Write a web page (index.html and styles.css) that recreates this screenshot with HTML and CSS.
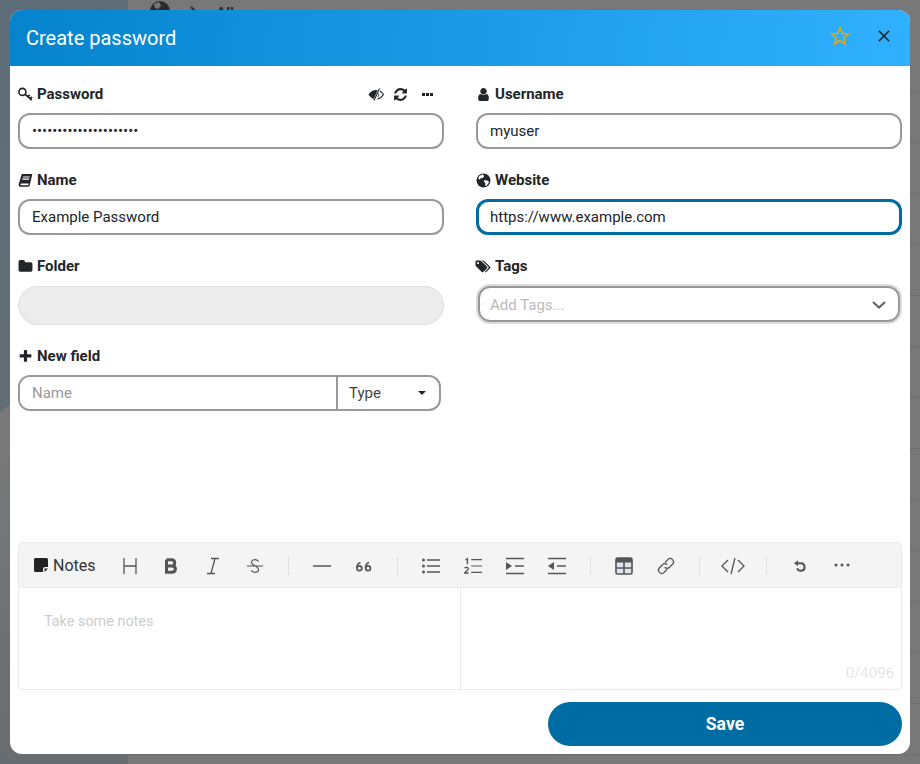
FILE: index.html
```html
<!DOCTYPE html>
<html lang="en">
<head>
    <meta charset="UTF-8">
    <meta name="viewport" content="width=device-width, initial-scale=1.0">
    <title>Create password</title>
    <link rel="stylesheet" href="styles.css">
</head>
<body>

    <div class="page">
        <div class="sidebar"><div class="sidebar-glow"></div></div>
        <div class="list">
            <div class="list-row list-top">
                <svg class="list-globe" viewBox="0 0 20 20"><circle cx="10" cy="10" r="10" fill="#2b2b2b"/><path d="M4 3 9 1l2 4-3 3-3-1zM13 11l5-1-2 6-3 1z" fill="#777"/></svg>
                <svg class="list-chevron" viewBox="0 0 10 10"><path d="M2 1 7 6" fill="none" stroke="#2b2b2b" stroke-width="2"/></svg>
                <span class="list-title">All</span>
            </div>
            <div class="list-row"></div><div class="list-row"></div><div class="list-row"></div>
            <div class="list-row"></div><div class="list-row"></div><div class="list-row"></div>
            <div class="list-row"></div><div class="list-row"></div><div class="list-row"></div>
            <div class="list-row"></div><div class="list-row"></div><div class="list-row"></div>
            <div class="list-row"></div>
        </div>
    </div>

    <div class="modal">
        <div class="modal-header">
            <h1>Create password</h1>
            <svg class="star" viewBox="0 0 20 20"><path d="M10 1.800 12.300 7.600 18.500 8 13.700 12 15.300 18 10 14.700 4.700 18 6.300 12 1.500 8 7.700 7.600Z" fill="none" stroke="#e2a610" stroke-width="1.600" stroke-linejoin="miter"/></svg>
            <svg class="close" viewBox="0 0 12 12"><path d="M.8.8 11.200 11.200M11.200.8.8 11.200" fill="none" stroke="#16232c" stroke-width="1.600"/></svg>
        </div>

        <form class="modal-form">
            <div class="form-grid">
                <div class="field">
                    <div class="field-label">
                        <svg class="icon" viewBox="0 0 15 15"><circle cx="4.400" cy="4.900" r="3.500" fill="none" stroke="currentColor" stroke-width="1.600"/><path d="M7 7.200 13.700 13.200M9.700 9.800l2-1.800M12 11.900l2.200-1.900" fill="none" stroke="currentColor" stroke-width="1.800"/></svg>
                        <span>Password</span>
                        <div class="field-actions">
                            <svg class="action eye" viewBox="0 0 16 13"><path d="M.5 6.500C2.500 3.500 5 2 8 2l1.600.2L5.700 11C3.600 10.300 1.900 8.700.5 6.500Z" fill="currentColor"/><path d="M11.500.5 6 12.500" stroke="currentColor" stroke-width="1.100"/><path d="M11.800 3C13.200 3.800 14.600 5 15.500 6.500 14 8.800 12 10.500 9.300 11" fill="none" stroke="currentColor" stroke-width="1.100"/><path d="M10.500 5.500c.5 1.400.1 2.700-1 3.500" fill="none" stroke="currentColor" stroke-width="1"/></svg>
                            <svg class="action refresh" viewBox="0 0 1792 1792"><path fill="currentColor" d="M1639 1056q0 5-1 7-64 268-268 434.500t-478 166.500q-146 0-282.500-55t-243.500-157l-129 129q-19 19-45 19t-45-19-19-45v-448q0-26 19-45t45-19h448q26 0 45 19t19 45-19 45l-137 137q71 66 161 102t187 36q134 0 250-65t186-179q11-17 53-117 8-23 30-23h192q13 0 22.500 9.500t9.500 22.500zm25-800v448q0 26-19 45t-45 19h-448q-26 0-45-19t-19-45 19-45l138-138q-148-137-349-137-134 0-250 65t-186 179q-11 17-53 117-8 23-30 23h-199q-13 0-22.500-9.500t-9.500-22.500v-7q65-268 270-434.500t480-166.500q146 0 284 55.500t245 156.500l130-129q19-19 45-19t45 19 19 45z"/></svg>
                            <svg class="action dots" viewBox="0 0 11 3"><path fill="currentColor" d="M0 0h3v3H0zM4 0h3v3H4zM8 0h3v3H8z"/></svg>
                        </div>
                    </div>
                    <input class="text-input" type="password" value="examplepassword123456">
                </div>

                <div class="field">
                    <div class="field-label">
                        <svg class="icon" viewBox="0 0 1792 1792"><path fill="currentColor" d="M1536 1399q0 109-62.500 187t-150.500 78h-854q-88 0-150.500-78t-62.500-187q0-85 8.500-160.500t31.500-152 58.500-131 94-89 134.500-34.500q131 128 313 128t313-128q76 0 134.500 34.500t94 89 58.500 131 31.500 152 8.500 160.500zm-256-887q0 159-112.500 271.500t-271.500 112.500-271.500-112.500-112.500-271.500 112.500-271.500 271.500-112.500 271.500 112.500 112.500 271.500z"/></svg>
                        <span>Username</span>
                    </div>
                    <input class="text-input" type="text" value="myuser">
                </div>

                <div class="field">
                    <div class="field-label">
                        <svg class="icon" viewBox="0 0 14 14"><path fill="currentColor" fill-rule="evenodd" d="M3.500 1H13.400L11 11.300C10.800 12.200 10.200 12.800 9.400 12.800H2.300C1.200 12.800.4 11.900.7 10.600ZM4.800 3.200 4.500 4.200H10.800L11.100 3.200ZM4.200 5.200 3.900 6.200H10.200L10.500 5.200ZM2.400 10.600C2.200 11 2.500 11.500 3 11.500H9.500L10 9.700H3.100C2.800 9.800 2.500 10.200 2.400 10.600Z"/></svg>
                        <span>Name</span>
                    </div>
                    <input class="text-input" type="text" value="Example Password">
                </div>

                <div class="field">
                    <div class="field-label">
                        <svg class="icon" viewBox="0 0 14 14"><circle cx="7" cy="7" r="6.500" fill="currentColor"/><path fill="#fff" d="M3 2.800 6.500 1.200 7.600 3 6 5 4.300 4.600 3.700 6.200 2 5ZM8 6.500 11 7.200 12.300 8.300 10 11.800 8.500 12 8.800 9.500 7.300 8Z"/></svg>
                        <span>Website</span>
                    </div>
                    <input class="text-input is-focused" type="text" value="https://www.example.com">
                </div>

                <div class="field field-tall">
                    <div class="field-label">
                        <svg class="icon" viewBox="0 0 1792 1792"><path fill="currentColor" d="M1728 608v704q0 92-66 158t-158 66h-1216q-92 0-158-66t-66-158v-960q0-92 66-158t158-66h320q92 0 158 66t66 158v32h672q92 0 158 66t66 158z"/></svg>
                        <span>Folder</span>
                    </div>
                    <input class="text-input is-disabled" type="text" disabled>
                </div>

                <div class="field field-tall">
                    <div class="field-label">
                        <svg class="icon icon-wide" viewBox="0 0 1920 1792"><path fill="currentColor" d="M384 448q0-53-37.500-90.500t-90.500-37.500-90.500 37.500-37.500 90.500 37.500 90.500 90.500 37.500 90.500-37.500 37.500-90.500zm1067 576q0 53-37 90l-491 492q-39 37-91 37-53 0-90-37l-715-716q-38-37-64.500-101t-26.500-117v-416q0-52 38-90t90-38h416q53 0 117 26.500t102 64.500l715 714q37 39 37 91zm384 0q0 53-37 90l-491 492q-39 37-91 37-36 0-59-14t-53-45l470-470q37-37 37-90 0-52-37-91l-715-714q-38-38-102-64.500t-117-26.500h224q53 0 117 26.500t102 64.500l715 714q37 39 37 91z"/></svg>
                        <span>Tags</span>
                    </div>
                    <div class="tags-select">
                        <input type="text" placeholder="Add Tags...">
                        <svg class="tags-chevron" viewBox="0 0 14 8"><path d="M1 1 7 6.500 13 1" fill="none" stroke="#666" stroke-width="2.200"/></svg>
                    </div>
                </div>

                <div class="field">
                    <div class="field-label">
                        <svg class="icon" viewBox="0 0 1792 1792"><path fill="currentColor" d="M1600 736v192q0 40-28 68t-68 28h-416v416q0 40-28 68t-68 28h-192q-40 0-68-28t-28-68v-416h-416q-40 0-68-28t-28-68v-192q0-40 28-68t68-28h416v-416q0-40 28-68t68-28h192q40 0 68 28t28 68v416h416q40 0 68 28t28 68z"/></svg>
                        <span>New field</span>
                    </div>
                    <div class="new-field">
                        <input type="text" placeholder="Name">
                        <div class="type-select">Type<span class="caret"></span></div>
                    </div>
                </div>
            </div>
        </form>

        <div class="editor">
            <div class="toolbar">
                <div class="notes-label">
                    <svg class="notes-icon" viewBox="0 0 14 14"><path fill="#222" d="M1.500 0h11A1.500 1.500 0 0 1 14 1.500V9h-3a2 2 0 0 0-2 2v3H1.500A1.500 1.500 0 0 1 0 12.500v-11A1.500 1.500 0 0 1 1.500 0ZM10.500 10.500H14L10.500 14Z"/></svg>
                    <span>Notes</span>
                </div>
                <button type="button" class="tool"><svg viewBox="0 0 18 18"><path d="M4 1v16M16 1v16M4 9h12" class="thin"/></svg></button>
                <button type="button" class="tool"><svg viewBox="0 0 18 18"><path d="M4.500 2.800v12.400h5.300c2.200 0 3.600-1.400 3.600-3.300 0-1.900-1.400-3-3.600-3H4.500m5 0c2 0 3.200-1.100 3.200-3 0-1.900-1.300-3.100-3.200-3.100H4.500" class="bold"/></svg></button>
                <button type="button" class="tool"><svg viewBox="0 0 18 18"><path d="M7 1.500h8M3 16.500h8M11 1.500 7 16.500" class="thin"/></svg></button>
                <button type="button" class="tool"><svg viewBox="0 0 20 18"><path d="M1 9h18M14 4C13 2.500 11.500 2 10 2 8 2 6 3 6 5c0 3 8 4 8 8 0 2-2 3-4 3-1.800 0-3.400-.6-4.300-2.200" class="thin"/></svg></button>
                <span class="tool-divider"></span>
                <button type="button" class="tool"><svg viewBox="0 0 18 18"><path d="M0 9h18" class="thin"/></svg></button>
                <button type="button" class="tool"><svg viewBox="0 0 16 18"><circle cx="3.400" cy="11.300" r="2.400" class="ring-line"/><circle cx="12" cy="11.300" r="2.400" class="ring-line"/><path d="M1 11C1 8 2.500 6 4.500 5.500M9.600 11c0-3 1.500-5 3.500-5.500" class="ring-line"/></svg></button>
                <span class="tool-divider"></span>
                <button type="button" class="tool"><svg viewBox="0 0 18 18"><path d="M5 3h13M5 9h13M5 15h13" class="thin"/><circle cx="1.500" cy="3" r="1.500" class="dot"/><circle cx="1.500" cy="9" r="1.500" class="dot"/><circle cx="1.500" cy="15" r="1.500" class="dot"/></svg></button>
                <button type="button" class="tool"><svg viewBox="0 0 20 18"><path d="M8 2h12M8 9h12M8 16h12" class="thin"/><path d="M1.800 2.200 3.800 1V7" class="num"/><path d="M.8 11.500c.4-1.300 4-1.300 4 .6 0 1.700-3.600 2.900-4 4.700h4.400" class="num"/></svg></button>
                <button type="button" class="tool"><svg viewBox="0 0 18 18"><path d="M0 1.500h18M9 9h9M0 16.500h18" class="thin"/><path d="M0 5v8l6-4z" class="dot"/></svg></button>
                <button type="button" class="tool"><svg viewBox="0 0 18 18"><path d="M0 1.500h18M9 9h9M0 16.500h18" class="thin"/><path d="M6 5v8L0 9z" class="dot"/></svg></button>
                <span class="tool-divider"></span>
                <button type="button" class="tool"><svg viewBox="0 0 18 18"><rect x="1" y="1" width="16" height="16" rx="1.500" fill="#dde3ef" stroke="#555" stroke-width="1.600"/><rect x="1" y="1" width="16" height="4.500" fill="#555"/><path d="M9 5v12M1 11h16" stroke="#555" stroke-width="1.600"/></svg></button>
                <button type="button" class="tool"><svg viewBox="0 0 18 18"><path d="M8 5.500 10.800 2.600a3.300 3.300 0 0 1 4.700 4.700l-3 3a3.300 3.300 0 0 1-4.700 0M10 12.500l-2.800 2.900a3.300 3.300 0 0 1-4.700-4.700l3-3a3.300 3.300 0 0 1 4.700 0" class="thin"/></svg></button>
                <span class="tool-divider"></span>
                <button type="button" class="tool"><svg class="tool-code" viewBox="0 0 24 18"><path d="M7 3 1 9l6 6M17 3l6 6-6 6M14 1 10 17" class="thin"/></svg></button>
                <span class="tool-divider"></span>
                <button type="button" class="tool"><svg class="tool-undo" viewBox="0 0 12 12"><path d="M2.500 3.200H7a3.800 3.800 0 1 1-3.800 5" class="undo"/><path d="M0 3.200 4 .2v6z" class="dot"/></svg></button>
                <button type="button" class="tool"><svg viewBox="0 0 18 18"><circle cx="3" cy="8" r="1.500" class="dot"/><circle cx="9" cy="8" r="1.500" class="dot"/><circle cx="15" cy="8" r="1.500" class="dot"/></svg></button>
            </div>
            <div class="editor-panes">
                <div class="pane pane-edit">Take some notes</div>
                <div class="pane"></div>
                <span class="counter">0/4096</span>
            </div>
        </div>

        <div class="modal-footer">
            <button type="button" class="save-button">Save</button>
        </div>
    </div>

</body>
</html>
```

FILE: styles.css
```css
* {
    box-sizing: border-box;
}
body {
    margin: 0;
    height: 764px;
    overflow: hidden;
    font-family: Roboto, Arial, sans-serif;
    font-size: 15px;
    color: #212529;
    background-color: #777;
}

/* dimmed page behind the dialog */
.page {
    display: flex;
    height: 764px;
}
.sidebar {
    position: relative;
    width: 128px;
    overflow: hidden;
    background: linear-gradient(#5d6d78, #667074);
}
.sidebar-glow {
    position: absolute;
    left: -60px;
    top: 396px;
    width: 200px;
    height: 400px;
    border-radius: 50% 50% 0 0;
    background: linear-gradient(#7b7a7a, #656c70);
}
.list {
    flex: 1;
    background-color: #787878;
}
.list-row {
    height: 51px;
    border-bottom: 1px solid #6e6e6e;
}
.list-top {
    display: flex;
    align-items: flex-start;
    height: 92px;
}
.list-globe {
    width: 20px;
    height: 20px;
    margin: 1px 0 0 22px;
}
.list-chevron {
    width: 10px;
    height: 10px;
    margin: 6px 0 0 19px;
}
.list-title {
    margin: 5px 0 0 17px;
    font-weight: 700;
    line-height: 16px;
    color: #2b2b2b;
}

/* dialog */
.modal {
    position: absolute;
    left: 10px;
    top: 10px;
    width: 900px;
    height: 744px;
    display: flex;
    flex-direction: column;
    background-color: white;
    border-radius: 12px;
    overflow: hidden;
}
.modal-header {
    display: flex;
    align-items: center;
    height: 56px;
    padding: 0 20px 0 16px;
    background: linear-gradient(95deg, #0584cd, #30b1ff);
}
.modal-header h1 {
    flex: 1;
    margin: 0;
    font-size: 20px;
    font-weight: 400;
    color: white;
}
.star {
    width: 20px;
    height: 20px;
    margin-right: 28px;
    margin-top: -4px;
}
.close {
    width: 12px;
    height: 12px;
    margin-top: -4px;
}

/* fields */
.modal-form {
    flex: 1;
    padding: 18px 8px 0;
}
.form-grid {
    display: grid;
    grid-template-columns: 426px 426px;
    column-gap: 32px;
    row-gap: 21px;
    align-items: start;
}
.field-label {
    display: flex;
    align-items: center;
    gap: 4px;
    height: 20px;
    margin-bottom: 9px;
    font-weight: 700;
}
.field-tall .field-label {
    margin-bottom: 10px;
}
.icon {
    width: 15px;
    height: 15px;
    flex: none;
}
.icon-wide {
    overflow: visible;
}
.field-actions {
    display: flex;
    align-items: center;
    margin-left: auto;
    padding-right: 11px;
}
.action.eye {
    width: 16px;
    height: 13px;
}
.action.refresh {
    width: 15px;
    height: 15px;
    margin-left: 9px;
}
.action.dots {
    width: 11px;
    height: 3px;
    margin-left: 14px;
}
.text-input {
    display: block;
    width: 100%;
    height: 36px;
    padding: 0 12px;
    border: 2px solid #999;
    border-radius: 12px;
    outline: none;
    font-family: inherit;
    font-size: 15px;
    color: #212529;
    background-color: white;
}
.text-input.is-focused {
    border: 3px solid #006ca4;
    padding: 0 11px;
}
.text-input.is-disabled {
    height: 39px;
    border: 1px solid #dedede;
    border-radius: 20px;
    background-color: #ececec;
}
input::placeholder {
    color: #999;
}
.tags-select {
    display: flex;
    align-items: center;
    height: 36px;
    margin: 1px 2px;
    padding: 0 12px 0 10px;
    border: 2px solid #999;
    border-radius: 12px;
    box-shadow: 0 0 0 2px #dcdcdc;
}
.tags-select input {
    flex: 1;
    border: none;
    outline: none;
    padding: 1px 0 0;
    font-family: inherit;
    font-size: 15px;
}
.tags-select input::placeholder {
    color: #bbb;
}
.tags-chevron {
    width: 14px;
    height: 8px;
    margin-top: 1px;
}
.new-field {
    display: flex;
    width: 423px;
    height: 36px;
    border: 2px solid #999;
    border-radius: 12px;
    overflow: hidden;
}
.new-field input {
    flex: 1;
    min-width: 0;
    border: none;
    outline: none;
    padding: 0 12px;
    font-family: inherit;
    font-size: 15px;
}
.type-select {
    display: flex;
    align-items: center;
    justify-content: space-between;
    width: 103px;
    padding: 0 12px 0 11px;
    border-left: 2px solid #999;
    color: #444;
}
.caret {
    width: 0;
    height: 0;
    margin-right: 1px;
    border-left: 4px solid transparent;
    border-right: 4px solid transparent;
    border-top: 4px solid #222;
}

/* notes editor */
.editor {
    width: 884px;
    height: 148px;
    margin: 0 8px;
    border: 1px solid #ebebeb;
    border-radius: 4px;
    overflow: hidden;
}
.toolbar {
    display: flex;
    align-items: center;
    height: 45px;
    padding: 2px 0 0 15px;
    background-color: #f4f4f5;
    border-bottom: 1px solid #ebebeb;
}
.notes-label {
    display: flex;
    align-items: center;
    gap: 5px;
    width: 61px;
    margin: -2px 12.5px 0 0;
    font-size: 16px;
    color: #333;
}
.notes-icon {
    width: 14px;
    height: 14px;
    flex: none;
}
.tool {
    display: flex;
    align-items: center;
    justify-content: center;
    width: 42px;
    height: 26px;
    padding: 0;
    border: none;
    background: none;
}
.tool svg {
    width: 18px;
    height: 18px;
    overflow: visible;
}
.tool svg.tool-code {
    width: 24px;
}
.tool svg.tool-undo {
    width: 12px;
    height: 12px;
}
.thin {
    fill: none;
    stroke: #555;
    stroke-width: 1.300;
}
.bold {
    fill: none;
    stroke: #555;
    stroke-width: 3;
}
.dot {
    fill: #555;
}
.num {
    fill: none;
    stroke: #555;
    stroke-width: 1.500;
}
.undo {
    fill: none;
    stroke: #555;
    stroke-width: 2;
}
.ring-line {
    fill: none;
    stroke: #555;
    stroke-width: 1.700;
}
.tool-divider {
    width: 1px;
    height: 18px;
    margin: 0 12px;
    background-color: #dfdfe3;
}
.editor-panes {
    position: relative;
    display: flex;
    height: 101px;
}
.pane {
    flex: 1;
    padding: 25px 25px 0;
    font-size: 14.4px;
    color: #ccc;
}
.pane-edit {
    border-right: 1px solid #ebebeb;
}
.counter {
    position: absolute;
    right: 7px;
    bottom: 7px;
    color: #e6e6e6;
}

/* footer */
.modal-footer {
    display: flex;
    justify-content: flex-end;
    padding: 12px 8px 8px;
}
.save-button {
    width: 354px;
    height: 44px;
    border: none;
    border-radius: 22px;
    font-family: inherit;
    font-size: 17.6px;
    font-weight: 700;
    color: white;
    background-color: #006ca4;
}
```
